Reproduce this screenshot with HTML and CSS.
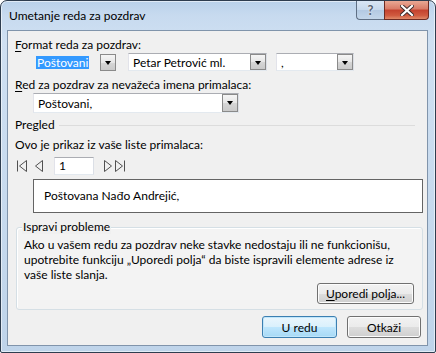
FILE: index.html
```html
<!DOCTYPE html>
<html lang="sr">
<head>
<meta charset="utf-8">
<title>Umetanje reda za pozdrav</title>
<link rel="stylesheet" href="styles.css">
</head>
<body>
<div class="window">
  <div class="titlebar">
    <span class="title">Umetanje reda za pozdrav</span>
    <div class="caption-btns">
      <div class="cap-btn help">?</div>
      <div class="cap-btn close">
        <svg width="14" height="11" viewBox="0 0 14 11">
          <path d="M2 1 L12 10 M12 1 L2 10" stroke="#3a2a2a" stroke-width="4" stroke-linecap="square"/>
          <path d="M2 1 L12 10 M12 1 L2 10" stroke="#ffffff" stroke-width="2.2" stroke-linecap="square"/>
        </svg>
      </div>
    </div>
  </div>
  <div class="client">
    <div class="label l1"><u>F</u>ormat reda za pozdrav:</div>
    <div class="row r1">
      <div class="combo c1">
        <span class="sel">Poštovani</span>
        <span class="arrow"></span>
      </div>
      <div class="combo edit c2">
        <span class="val">Petar Petrović ml.</span>
        <span class="arrow"></span>
      </div>
      <div class="combo edit c3">
        <span class="val">,</span>
        <span class="arrow"></span>
      </div>
    </div>
    <div class="label l2"><u>R</u>ed za pozdrav za nevažeća imena primalaca:</div>
    <div class="row r2">
      <div class="combo edit c4">
        <span class="val">Poštovani,</span>
        <span class="arrow"></span>
      </div>
    </div>
    <div class="section-head">
      <span>Pregled</span>
      <span class="rule"></span>
    </div>
    <div class="label l3">Ovo je prikaz iz vaše liste primalaca:</div>
    <div class="nav">
      <svg class="nav-ic" width="12" height="18" viewBox="0 0 12 18">
        <path d="M1.5 3.5 V14.5 M10.5 3.5 L3.5 9 L10.5 14.5 Z" fill="none" stroke="#505050" stroke-width="1"/>
      </svg>
      <svg class="nav-ic prev" width="10" height="18" viewBox="0 0 10 18">
        <path d="M8.5 3.5 L1.5 9 L8.5 14.5 Z" fill="none" stroke="#505050" stroke-width="1"/>
      </svg>
      <div class="rec">1</div>
      <svg class="nav-ic next" width="10" height="18" viewBox="0 0 10 18">
        <path d="M1.5 3.5 L8.5 9 L1.5 14.5 Z" fill="none" stroke="#505050" stroke-width="1"/>
      </svg>
      <svg class="nav-ic last" width="12" height="18" viewBox="0 0 12 18">
        <path d="M1.5 3.5 L8.5 9 L1.5 14.5 Z M10.5 3.5 V14.5" fill="none" stroke="#505050" stroke-width="1"/>
      </svg>
    </div>
    <div class="preview">Poštovana Na<span class="dj">đ</span>o Andrejić,</div>
    <div class="group">
      <div class="group-label">Ispravi probleme</div>
      <p class="group-text">Ako u vašem redu za pozdrav neke stavke nedostaju ili ne funkcionišu,<br>upotrebite funkciju „Uporedi polja“ da biste ispravili elemente adrese iz<br>vaše liste slanja.</p>
      <div class="group-actions">
        <button class="btn match"><u>U</u>poredi polja...</button>
      </div>
    </div>
    <div class="footer">
      <button class="btn default">U redu</button>
      <button class="btn cancel">Otkaži</button>
    </div>
  </div>
</div>
</body>
</html>
```

FILE: styles.css
```css
* { box-sizing: border-box; }
html, body { margin: 0; padding: 0; }
body {
  width: 436px;
  height: 353px;
  overflow: hidden;
  background: #ffffff;
  font-family: Lato, "Noto Sans", sans-serif;
  font-size: 12px;
  line-height: 15px;
  color: #000;
}
u { text-decoration: underline; text-underline-offset: 2px; }

.window {
  width: 436px;
  height: 353px;
  border: 1px solid #2e3d4f;
  border-radius: 7px 7px 2px 2px;
  background: linear-gradient(180deg, #b9d1ea 0px, #c7daef 14px, #cfe0f2 40px, #bfd4ea 100%);
  padding: 0 7px 6px 6px;
  display: flex;
  flex-direction: column;
  box-shadow: inset 0 0 0 1px rgba(255,255,255,0.55);
}

.titlebar {
  height: 29px;
  display: flex;
  align-items: flex-start;
  justify-content: space-between;
  flex: none;
}
.title {
  margin: 7px 0 0 2px;
  font-size: 12px;
  color: #000;
}
.caption-btns {
  display: flex;
  margin-right: -1px;
}
.cap-btn {
  height: 19px;
  border: 1px solid #5f6f84;
  border-top: none;
  display: flex;
  align-items: center;
  justify-content: center;
}
.help {
  width: 28px;
  border-radius: 0 0 0 4px;
  border-right: none;
  background: linear-gradient(180deg, #d9e6f4 0%, #c6d8ec 50%, #b3c9e2 51%, #c3d6ea 100%);
  color: #5a6470;
  font-weight: bold;
  font-size: 13px;
  text-shadow: 0 0 2px #fff;
}
.close {
  width: 45px;
  border-radius: 0 0 4px 0;
  border-color: #6d2a22;
  background: linear-gradient(180deg, #e9a894 0%, #d87a66 45%, #c4412e 50%, #d05a3f 80%, #e08a6a 100%);
}

.client {
  flex: 1;
  border: 1px solid #8094ab;
  background: #f0f0f0;
  padding: 0 6px 0 1px;
  display: flex;
  flex-direction: column;
}

.label { padding-left: 6px; flex: none; }
.l1 { margin-top: 6px; }
.l2 { margin-top: 6px; }
.l3 { margin-top: 5px; }

.row { display: flex; margin-top: 1px; flex: none; }
.combo {
  height: 18px;
  display: flex;
  align-items: center;
  justify-content: space-between;
  position: relative;
}
.c1 { width: 82px; margin-left: 25px; padding-left: 2px; }
.sel {
  background: #3399ff;
  color: #fff;
  padding: 0 1px;
  height: 13px;
  line-height: 13px;
  white-space: nowrap;
}
.edit {
  background: #fff;
  border: 1px solid #abadb3;
  border-color: #abadb3 #dbdfe6 #e3e9ef #e2e3ea;
  padding-left: 4px;
}
.c2 { width: 139px; margin-left: 12px; }
.c3 { width: 78px; margin-left: 9px; }
.c4 { width: 206px; margin-left: 24px; height: 20px; }
.arrow {
  width: 16px;
  height: 17px;
  border: 1px solid #8a8a8a;
  background: linear-gradient(180deg, #f5f5f5 0%, #e6e6e6 50%, #d6d6d6 51%, #cacaca 100%);
  position: relative;
  flex: none;
}
.edit .arrow { height: 16px; margin-right: 0; }
.c4 .arrow { height: 18px; }
.arrow::after {
  content: "";
  position: absolute;
  left: 4px;
  top: 6px;
  border-left: 3.5px solid transparent;
  border-right: 3.5px solid transparent;
  border-top: 4px solid #000;
}

.section-head {
  margin-top: 4px;
  padding-left: 6px;
  display: flex;
  align-items: center;
  flex: none;
}
.rule {
  flex: 1;
  height: 1px;
  background: #dcdcdc;
  margin: 1px 6px 0 4px;
}

.nav {
  margin-top: 5px;
  height: 18px;
  display: flex;
  align-items: center;
  padding-left: 7px;
  flex: none;
}
.nav-ic { display: block; flex: none; }
.prev { margin-left: 6px; }
.rec {
  width: 40px;
  height: 18px;
  margin-left: 10px;
  background: #fff;
  border: 1px solid #abadb3;
  border-color: #abadb3 #dbdfe6 #e3e9ef #e2e3ea;
  padding-left: 4px;
  line-height: 16px;
}
.next { margin-left: 9px; }
.last { margin-left: 1px; }

.preview {
  margin: 4px 0 0 24px;
  width: 390px;
  height: 34px;
  background: #fff;
  border: 1px solid #646464;
  padding: 8px 0 0 10px;
  flex: none;
}
.dj { font-family: "Noto Sans", sans-serif; font-size: 11.5px; }

.group {
  position: relative;
  margin: 14px 0 0 7px;
  width: 407px;
  border: 1px solid #d5dfe5;
  border-radius: 3px;
  padding: 9px 8px 5px 7px;
  background: #f3f3f3;
  box-shadow: inset 1px 1px 0 #fff;
  flex: none;
}
.group-label {
  position: absolute;
  left: 5px;
  top: -9px;
  padding: 0 1px;
  background: #f0f0f0;
}
.group-text { margin: 0; white-space: nowrap; }
.group-actions {
  display: flex;
  justify-content: flex-end;
  margin-top: 1px;
}

.btn {
  font-family: inherit;
  font-size: 12px;
  line-height: 15px;
  color: #000;
  border: 1px solid #707070;
  border-radius: 3px;
  background: linear-gradient(180deg, #f2f2f2 0%, #ebebeb 50%, #dddddd 51%, #cfcfcf 100%);
  box-shadow: inset 0 0 0 1px #fcfcfc;
  padding: 0;
  margin: 0;
}
.match { width: 97px; height: 21px; }

.footer {
  margin-top: 6px;
  display: flex;
  justify-content: flex-end;
  gap: 10px;
  flex: none;
}
.footer .btn { height: 22px; }
.default {
  width: 75px;
  border-color: #3c7fb1;
  background: linear-gradient(180deg, #eaf6fd 0%, #d9f0fc 50%, #bee6fd 51%, #a7d9f5 100%);
  box-shadow: inset 0 0 0 1px #c0e6fb;
}
.cancel { width: 74px; }
```
